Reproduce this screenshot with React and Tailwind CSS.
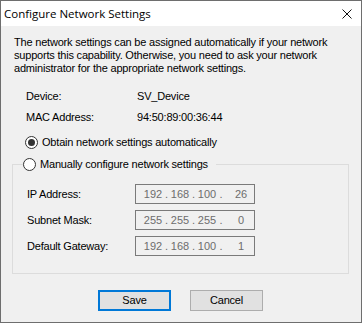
import React, { useState } from "react";

const sans = { fontFamily: '"Liberation Sans", Arial, sans-serif' };

const IpBox = ({ parts }) => {
  // fixed field widths so the numbers sit like the Windows IP control
  return (
    <div className="w-[120px] h-[20px] border border-[#7a7a7a] flex items-center text-[11px] text-[#6d6d6d] pl-[6px] tracking-normal">
      <span className="w-[22px] text-center">{parts[0]}</span>
      <span className="w-[5px] text-center">.</span>
      <span className="w-[22px] text-center">{parts[1]}</span>
      <span className="w-[5px] text-center">.</span>
      <span className="w-[22px] text-center">{parts[2]}</span>
      <span className="w-[6px] text-center">.</span>
      <span className="w-[26px] ml-[4px] text-center">{parts[3]}</span>
    </div>
  );
};

const Radio = ({ checked }) => (
  <span className="w-[13px] h-[13px] rounded-full border border-[#333] bg-white flex items-center justify-center shrink-0">
    {checked && <span className="w-[7px] h-[7px] rounded-full bg-[#333]"></span>}
  </span>
);

const App = () => {
  const [auto, setAuto] = useState(true);

  return (
    <div
      className="w-[362px] h-[323px] border border-[#6e6e6e] flex flex-col bg-[#f0f0f0] text-black"
      style={sans}
    >
      {/* title bar */}
      <div className="h-[25px] bg-white flex items-center justify-between pl-[3px] pr-[9px] shrink-0">
        <span
          className="text-[11.5px] leading-none"
          style={{ fontFamily: '"Segoe UI", "Open Sans", "Noto Sans", sans-serif' }}
        >
          Configure Network Settings
        </span>
        <svg width="10" height="10" viewBox="0 0 10 10">
          <path d="M0.5 0.5 L9.5 9.5 M9.5 0.5 L0.5 9.5" stroke="#111" strokeWidth="1" />
        </svg>
      </div>

      {/* body */}
      <div className="flex-1 flex flex-col pl-[11px] pr-[12px] text-[11px] leading-[13px] tracking-[-0.2px]">
        <p className="mt-[10px] ml-[2px]">
          The network settings can be assigned automatically if your network
          <br />
          supports this capability. Otherwise, you need to ask your network
          <br />
          administrator for the appropriate network settings.
        </p>

        <div className="mt-[15px] ml-[14px] flex">
          <span className="w-[111px]">Device:</span>
          <span>SV_Device</span>
        </div>
        <div className="mt-[8px] ml-[14px] flex">
          <span className="w-[111px]">MAC Address:</span>
          <span>94:50:89:00:36:44</span>
        </div>

        <label
          className="mt-[12px] ml-[13px] flex items-center gap-[4px] cursor-default"
          onClick={() => setAuto(true)}
        >
          <Radio checked={auto} />
          <span>Obtain network settings automatically</span>
        </label>

        <fieldset className="mt-[9px] border border-[#dcdcdc] pb-[17px]">
          <legend className="ml-[10px] pr-[8px]">
            <label
              className="flex items-center gap-[4px] cursor-default"
              onClick={() => setAuto(false)}
            >
              <Radio checked={!auto} />
              <span>Manually configure network settings</span>
            </label>
          </legend>

          <div className="mt-[13px] pl-[14px] flex flex-col gap-[6px]">
            <div className="flex items-center">
              <span className="w-[108px]">IP Address:</span>
              <IpBox parts={["192", "168", "100", "26"]} />
            </div>
            <div className="flex items-center">
              <span className="w-[108px]">Subnet Mask:</span>
              <IpBox parts={["255", "255", "255", "0"]} />
            </div>
            <div className="flex items-center">
              <span className="w-[108px]">Default Gateway:</span>
              <IpBox parts={["192", "168", "100", "1"]} />
            </div>
          </div>
        </fieldset>

        <div className="mt-[16px] flex justify-center gap-[19px]">
          <button className="w-[73px] h-[21px] border-2 border-[#0078d7] bg-[#e1e1e1] text-[11px]">
            Save
          </button>
          <button className="w-[73px] h-[21px] border border-[#adadad] bg-[#e1e1e1] text-[11px]">
            Cancel
          </button>
        </div>
      </div>
    </div>
  );
};

export default App;
